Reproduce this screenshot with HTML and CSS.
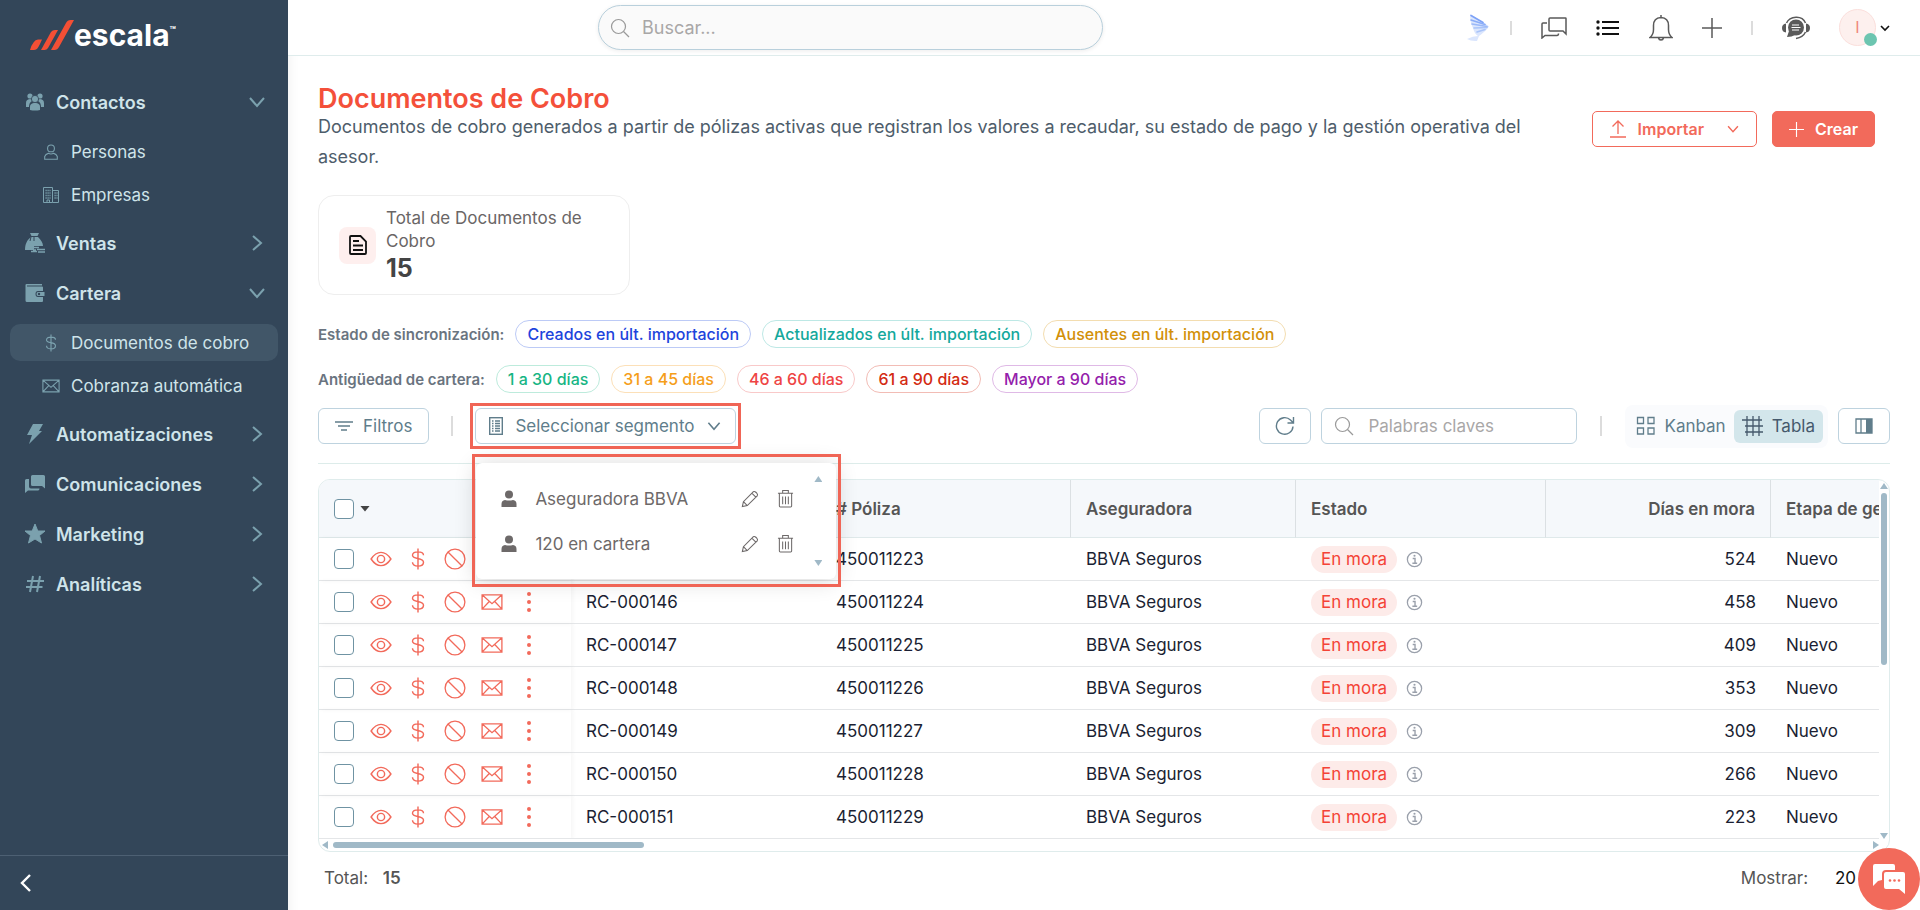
FILE: index.html
```html
<!DOCTYPE html>
<html lang="es">
<head>
<meta charset="UTF-8">
<meta name="viewport" content="width=device-width, initial-scale=1.0">
<title>Documentos de Cobro</title>
<link rel="stylesheet" href="styles.css">
</head>
<body>

<!-- icon sprite -->
<svg class="sprite" aria-hidden="true">
  <symbol id="i-down" viewBox="0 0 20 20"><path d="M3 6l7 8 7-8" fill="none" stroke="currentColor" stroke-width="2"/></symbol>
  <symbol id="i-right" viewBox="0 0 20 20"><path d="M6 3l8 7-8 7" fill="none" stroke="currentColor" stroke-width="2"/></symbol>
  <symbol id="i-left" viewBox="0 0 20 20"><path d="M14 2l-8 8 8 8" fill="none" stroke="currentColor" stroke-width="2.4"/></symbol>
  <symbol id="i-group" viewBox="0 0 20 20"><g fill="currentColor"><circle cx="5" cy="4" r="2.6"/><circle cx="15" cy="4" r="2.6"/><path d="M1 15V11c0-3 2-4 4.500-4L7 9c-2 1-3 3-3 6zM19 15V11c0-3-2-4-4.500-4L13 9c2 1 3 3 3 6z"/></g><circle cx="10" cy="7" r="3.600" fill="currentColor" stroke="#334659" stroke-width=".8"/><path d="M5 18v-3c0-3 2-4 5-4s5 1 5 4v3q-5 1-10 0z" fill="currentColor"/></symbol>
  <symbol id="i-user" viewBox="0 0 18 20"><g fill="none" stroke="currentColor" stroke-width="1.200"><circle cx="9" cy="6" r="3.800"/><path d="M2 18v-3q1-3 4-3.500 3 1.500 6 0 3 .5 4 3.500v3z"/></g></symbol>
  <symbol id="i-building" viewBox="0 0 18 18"><g fill="none" stroke="currentColor"><path d="M1.500 16.500v-15h9v15zM10.500 4.500h6v12h-6M5 16v-2h2.500v2"/><path d="M3.500 4.500h5M3.500 7h5M3.500 9.500h5M3.500 12h5M12.500 7h3M12.500 9.500h3M12.500 12h3" stroke-dasharray="1.200 .8" stroke-width="1.300"/></g></symbol>
  <symbol id="i-bag" viewBox="0 0 20 20"><path d="M5 0h9l-1.500 3h-6zM6 4h7c3 3 5 6 5 9h-9v4H0c0-6 2-10 6-13z" fill="currentColor"/><path d="M6 4L5 8M9 4v4" stroke="#334659" fill="none"/><path d="M7 14.500h7M12 16.500h8M6 18.500h6M13 19h7M8 17h3" stroke="currentColor" stroke-width="1.300"/></symbol>
  <symbol id="i-wallet" viewBox="0 0 20 20"><path d="M1.500 1H17v1.500H2v1h15q1 0 1 1V8h-5q-2.500 0-2.500 3t2.500 3h5v4q0 1-1 1H2q-1.500 0-1.500-1.500V2q0-1 1-1z" fill="currentColor"/><path d="M19.500 9v4h-6.500q-1.500 0-1.500-2t1.500-2z" fill="currentColor"/><circle cx="14" cy="11" r="1.200" fill="#334659"/></symbol>
  <symbol id="i-dollar" viewBox="0 0 14 20"><path d="M12 6.500C12 4.500 10 3.500 7 3.500S2 4.500 2 6.700C2 11 12 8 12 13c0 2.500-2 3.500-5 3.500s-5-1-5-3.500M7 .5v19" fill="none" stroke="currentColor" stroke-width="1.300"/></symbol>
  <symbol id="i-mail" viewBox="0 0 20 16"><path d="M1 1.500h18v13H1zM1 1.500l9 8 9-8M1 14.500l6.500-7M19 14.500l-6.500-7" fill="none" stroke="currentColor" stroke-width="1.200"/></symbol>
  <symbol id="i-bolt" viewBox="0 0 20 20"><path d="M8 0h10l-4 7h3L4 20l3-9H2z" fill="currentColor"/></symbol>
  <symbol id="i-chats" viewBox="0 0 20 20"><path d="M7.500 1h11q1.500 0 1.500 1.500v12L17 12H7.500Q6 12 6 10.500v-8Q6 1 7.500 1z" fill="currentColor"/><path d="M4 5H1.500Q0 5 0 6.500V19l3-2.500h10q1.500 0 1.500-2H6q-2 0-2-2z" fill="currentColor"/></symbol>
  <symbol id="i-star" viewBox="0 0 20 20"><path d="M10 0l2.800 7H20l-5.500 4.500L16.500 19 10 15l-6.500 4 2-7.500L0 7h7.200z" fill="currentColor" stroke="currentColor" stroke-linejoin="round"/></symbol>
  <symbol id="i-hash" viewBox="0 0 20 20"><path d="M8 2L5 18M15 2l-3 16M2 7h17M1 13h16.500" fill="none" stroke="currentColor" stroke-width="2"/></symbol>
  <symbol id="i-search" viewBox="0 0 20 20"><g fill="none" stroke="currentColor" stroke-width="1.200"><circle cx="8.500" cy="8.500" r="7"/><path d="M13.500 13.500l5.500 5.500"/></g></symbol>
  <symbol id="i-plus" viewBox="0 0 20 20"><path d="M10 0v20M0 10h20" fill="none" stroke="currentColor" stroke-width="1.500"/></symbol>
  <symbol id="i-upload" viewBox="0 0 18 18"><path d="M9 14V1M3.500 6.500L9 1l5.500 5.500M1 17h16" fill="none" stroke="currentColor" stroke-width="1.300"/></symbol>
  <symbol id="i-eye" viewBox="0 0 20 16"><g fill="none" stroke="currentColor" stroke-width="1.300"><path d="M1 8q4-6 9-6t9 6q-4 6-9 6T1 8z"/><circle cx="10" cy="8" r="3.300"/></g></symbol>
  <symbol id="i-ban" viewBox="0 0 20 20"><g fill="none" stroke="currentColor" stroke-width="1.200"><circle cx="10" cy="10" r="9"/><path d="M3.600 3.600l12.800 12.800"/></g></symbol>
  <symbol id="i-dots" viewBox="0 0 6 22"><g fill="currentColor"><circle cx="3" cy="3" r="2"/><circle cx="3" cy="11" r="2"/><circle cx="3" cy="19" r="2"/></g></symbol>
  <symbol id="i-info" viewBox="0 0 16 16"><circle cx="8" cy="8" r="6.700" fill="none" stroke="currentColor" stroke-width="1.200"/><path d="M6.300 7H8.500v4.500M6 11.500h4.500" fill="none" stroke="currentColor" stroke-width="1.300"/><circle cx="8" cy="4.500" r="1" fill="currentColor"/></symbol>
  <symbol id="i-person" viewBox="0 0 16 18"><circle cx="8" cy="4.500" r="4" fill="currentColor"/><path d="M.5 17v-3q0-3.500 3.500-4 4 1.200 8 0 3.500.5 3.500 4v3z" fill="currentColor"/></symbol>
  <symbol id="i-pencil" viewBox="0 0 20 20"><path d="M1.500 18.500l1.200-5.500L13.500 2q1.500-1 3 .5l1 1q1.500 1.500.5 3L7 17.300zM12 3.500l4.500 4.500M2.700 13L7 17.300" fill="none" stroke="currentColor" stroke-width="1.200"/></symbol>
  <symbol id="i-trash" viewBox="0 0 18 20"><path d="M1 4.500h16M6 4V1.500h6V4M2.500 5v13q0 1 1 1h11q1 0 1-1V5M6 8v8M9 8v8M12 8v8" fill="none" stroke="currentColor" stroke-width="1.100"/></symbol>
</svg>

<div class="app">
  <aside class="sidebar">
    <a class="logo" href="#">
      <svg width="44" height="30" viewBox="0 0 44 30" aria-hidden="true">
        <g fill="#f44f35">
          <path d="M0 30q3-10 8-10.500h4Q8 29 6 29.500q-1 .5-6 .5z"/>
          <path d="M11 30L21 12q1.500-2 4-2h3L18 28q-1.200 2-3.500 2z"/>
          <path d="M21 30L36 3q1.500-3 4.500-3H44L29 27q-1.500 3-4.500 3z"/>
        </g>
      </svg>
      <span>escala</span><sup>™</sup>
    </a>
    <nav class="menu">
      <a class="item" href="#"><svg class="ico"><use href="#i-group"/></svg>Contactos<svg class="arrow"><use href="#i-down"/></svg></a>
      <div class="submenu">
        <a href="#"><svg class="ico"><use href="#i-user"/></svg>Personas</a>
        <a href="#"><svg class="ico"><use href="#i-building"/></svg>Empresas</a>
      </div>
      <a class="item" href="#"><svg class="ico"><use href="#i-bag"/></svg>Ventas<svg class="arrow"><use href="#i-right"/></svg></a>
      <a class="item" href="#"><svg class="ico"><use href="#i-wallet"/></svg>Cartera<svg class="arrow"><use href="#i-down"/></svg></a>
      <div class="submenu">
        <a class="active" href="#"><svg class="ico"><use href="#i-dollar"/></svg>Documentos de cobro</a>
        <a href="#"><svg class="ico"><use href="#i-mail"/></svg>Cobranza automática</a>
      </div>
      <a class="item" href="#"><svg class="ico"><use href="#i-bolt"/></svg>Automatizaciones<svg class="arrow"><use href="#i-right"/></svg></a>
      <a class="item" href="#"><svg class="ico"><use href="#i-chats"/></svg>Comunicaciones<svg class="arrow"><use href="#i-right"/></svg></a>
      <a class="item" href="#"><svg class="ico"><use href="#i-star"/></svg>Marketing<svg class="arrow"><use href="#i-right"/></svg></a>
      <a class="item" href="#"><svg class="ico"><use href="#i-hash"/></svg>Analíticas<svg class="arrow"><use href="#i-right"/></svg></a>
    </nav>
    <button class="collapse" aria-label="Contraer menú"><svg width="20" height="20"><use href="#i-left"/></svg></button>
  </aside>

  <div class="page">
    <header class="topbar">
      <label class="global-search">
        <svg width="20" height="20"><use href="#i-search"/></svg>
        <input type="text" placeholder="Buscar..." aria-label="Buscar">
      </label>
      <div class="top-icons">
        <button class="assistant" aria-label="Asistente">
          <svg width="24" height="28" viewBox="0 0 24 28"><path d="M3 0l13 8 6 4.500Q19 17 12 22L10 27q-6 .5-10-2 6-3 11-3-4-3-5-8-3-6-3-14z" fill="#dbe6fd"/><g fill="none" stroke-linecap="round" stroke-width="1.600"><path d="M4 1.500l12 7" stroke="#7da2f7"/><path d="M4 6l14 4.500" stroke="#8badf8"/><path d="M5 10l15 2.500" stroke="#9bb9f8"/><path d="M7 14l13-.5" stroke="#a9c4f9"/><path d="M10 18l8-2.500" stroke="#a9c4f9"/></g></svg>
        </button>
        <span class="sep"></span>
        <button aria-label="Chat">
          <svg width="26" height="22" viewBox="0 0 26 22"><path d="M9 1h15.500q.5 0 .5.500V17l-3-3H9q-1 0-1-1V2q0-1 1-1zM6 6H2Q1 6 1 7v14l3-2.500h12q1.500 0 1.500-2" fill="none" stroke="currentColor" stroke-width="1.500"/></svg>
        </button>
        <button class="dark" aria-label="Tareas">
          <svg width="24" height="18" viewBox="0 0 24 18"><path d="M6 3h17M6 9h17M6 15h17" stroke="currentColor" stroke-width="2"/><g fill="currentColor"><circle cx="2" cy="3" r="1.700"/><circle cx="2" cy="9" r="1.700"/><circle cx="2" cy="15" r="1.700"/></g></svg>
        </button>
        <button aria-label="Notificaciones">
          <svg width="24" height="26" viewBox="0 0 24 26"><path d="M12 0v2.500M1 22.500q3.500-3 3.500-8v-4Q4.500 3 12 2.500q7.500.5 7.500 8v4q0 5 3.500 8zM9.500 23q.5 2 2.500 2t2.500-2" fill="none" stroke="currentColor" stroke-width="1.500"/></svg>
        </button>
        <button aria-label="Añadir"><svg width="20" height="20"><use href="#i-plus"/></svg></button>
        <span class="sep"></span>
        <button aria-label="Soporte">
          <svg width="28" height="24" viewBox="0 0 28 24"><g fill="currentColor"><circle cx="14" cy="11.500" r="8"/><path d="M7 15l-2 6q5 0 8-2z"/><path d="M4 7.500v9q-4-.5-4-4.500t4-4.500zM24 7.500v9q4-.5 4-4.500t-4-4.500z"/></g><path d="M4.500 7Q7 1.500 14 1.200T23.500 7M23.500 16Q21 21.500 14 22.500" fill="none" stroke="currentColor" stroke-width="1.500"/><path d="M10 9h7M9.500 11.500h9M10 14h7" stroke="#fff"/></svg>
        </button>
        <button class="account" aria-label="Cuenta">
          <span class="avatar">I</span><span class="status"></span>
          <svg width="10" height="10" viewBox="0 0 10 10"><path d="M1 3l4 4 4-4" fill="none" stroke="currentColor" stroke-width="1.600"/></svg>
        </button>
      </div>
    </header>

    <main class="content">
      <section class="heading">
        <div class="heading-text">
          <h1>Documentos de Cobro</h1>
          <p>Documentos de cobro generados a partir de pólizas activas que registran los valores a recaudar, su estado de pago y la gestión operativa del asesor.</p>
        </div>
        <div class="heading-actions">
          <button class="btn-outline"><svg width="18" height="18"><use href="#i-upload"/></svg>Importar<svg class="caret" width="14" height="14"><use href="#i-down"/></svg></button>
          <button class="btn-solid"><svg width="15" height="15"><use href="#i-plus"/></svg>Crear</button>
        </div>
      </section>

      <section class="card">
        <span class="card-icon">
          <svg width="18" height="20" viewBox="0 0 18 20"><path d="M2 1h9.500L17 6.500V18q0 1-1 1H2q-1 0-1-1V2q0-1 1-1zM4 6h6M4 10.500h10M4 15h10" fill="none" stroke="#111" stroke-width="1.800"/></svg>
        </span>
        <div>
          <p>Total de Documentos de Cobro</p>
          <strong>15</strong>
        </div>
      </section>

      <div class="chips">
        <span>Estado de sincronización:</span>
        <button class="chip blue">Creados en últ. importación</button>
        <button class="chip teal">Actualizados en últ. importación</button>
        <button class="chip gold">Ausentes en últ. importación</button>
      </div>
      <div class="chips">
        <span>Antigüedad de cartera:</span>
        <button class="chip green">1 a 30 días</button>
        <button class="chip orange">31 a 45 días</button>
        <button class="chip red">46 a 60 días</button>
        <button class="chip darkred">61 a 90 días</button>
        <button class="chip purple">Mayor a 90 días</button>
      </div>

      <div class="toolbar">
        <button class="tool filters"><svg width="18" height="10" viewBox="0 0 18 10"><path d="M0 1h18M3 5h12M6 9h6" stroke="currentColor" stroke-width="1.500"/></svg>Filtros</button>
        <span class="sep"></span>
        <div class="segment">
          <button class="tool"><svg width="14" height="18" viewBox="0 0 14 18"><rect x=".700" y=".700" width="12.600" height="16.600" fill="none" stroke="currentColor" stroke-width="1.400"/><path d="M3 4h1.500M6 4h5M3 6.500h1.500M6 6.500h5M3 9h1.500M6 9h5M3 11.500h1.500M6 11.500h5M3 14h1.500M6 14h5" stroke="currentColor" stroke-width="1.300"/></svg>Seleccionar segmento<svg width="16" height="16"><use href="#i-down"/></svg></button>
          <div class="mark mark-button"></div>
          <div class="mark mark-menu"></div>
          <div class="dropdown">
            <ul>
              <li><svg width="16" height="18"><use href="#i-person"/></svg><span>Aseguradora BBVA</span><button aria-label="Editar"><svg width="18" height="18"><use href="#i-pencil"/></svg></button><button aria-label="Eliminar"><svg width="17" height="19"><use href="#i-trash"/></svg></button></li>
              <li><svg width="16" height="18"><use href="#i-person"/></svg><span>120 en cartera</span><button aria-label="Editar"><svg width="18" height="18"><use href="#i-pencil"/></svg></button><button aria-label="Eliminar"><svg width="17" height="19"><use href="#i-trash"/></svg></button></li>
            </ul>
            <div class="steps"><i class="tri up"></i><i class="tri down"></i></div>
          </div>
        </div>

        <div class="tools-right">
          <button class="tool square" aria-label="Actualizar"><svg width="20" height="20" viewBox="0 0 20 20"><path d="M18 10.500A8.300 8.300 0 1 1 15.500 4L18 6.500M18.500 1v6h-6" fill="none" stroke="currentColor" stroke-width="1.400"/></svg></button>
          <label class="keyword">
            <svg width="20" height="20"><use href="#i-search"/></svg>
            <input type="text" placeholder="Palabras claves" aria-label="Palabras claves">
          </label>
          <span class="sep"></span>
          <div class="views">
            <button><svg width="20" height="20" viewBox="0 0 20 20"><path d="M1.500 1.500h6v6h-6zM12 1.500h6v6h-6zM1.500 12h6v6h-6zM12 12h6v6h-6z" fill="none" stroke="currentColor" stroke-width="1.300"/></svg>Kanban</button>
            <button class="selected"><svg width="22" height="22" viewBox="0 0 22 22"><path d="M5 1v20M11 1v20M17 1v20M0 5h20M3 11h18M3 17h18" fill="none" stroke="currentColor" stroke-width="1.300"/></svg>Tabla</button>
          </div>
          <button class="tool square" aria-label="Columnas"><svg width="18" height="16" viewBox="0 0 18 16"><path d="M1 1h16v14H1zM6 1v14" fill="none" stroke="currentColor" stroke-width="1.300"/><path d="M11 1h6v14h-6z" fill="currentColor"/></svg></button>
        </div>
      </div>

      <div class="grid">
        <div class="grid-view">
          <table>
            <colgroup><col class="c-actions"><col class="c-wide"><col class="c-wide"><col class="c-mid"><col class="c-wide"><col class="c-mid"><col class="c-wide"></colgroup>
            <thead>
              <tr>
                <th><div class="actions"><input type="checkbox" aria-label="Seleccionar todo"><i class="tri menu-tri"></i></div></th>
                <th></th>
                <th># Póliza</th>
                <th>Aseguradora</th>
                <th>Estado</th>
                <th class="num">Días en mora</th>
                <th>Etapa de gestión</th>
              </tr>
            </thead>
            <tbody>
              <tr>
                <td><div class="actions"><input type="checkbox" aria-label="Seleccionar"><svg><use href="#i-eye"/></svg><svg><use href="#i-dollar"/></svg><svg><use href="#i-ban"/></svg></div></td>
                <td></td><td>450011223</td><td>BBVA Seguros</td>
                <td><div class="state"><span>En mora</span><svg><use href="#i-info"/></svg></div></td>
                <td class="num">524</td><td>Nuevo</td>
              </tr>
              <tr>
                <td><div class="actions"><input type="checkbox" aria-label="Seleccionar"><svg><use href="#i-eye"/></svg><svg><use href="#i-dollar"/></svg><svg><use href="#i-ban"/></svg><svg><use href="#i-mail"/></svg><svg><use href="#i-dots"/></svg></div></td>
                <td>RC-000146</td><td>450011224</td><td>BBVA Seguros</td>
                <td><div class="state"><span>En mora</span><svg><use href="#i-info"/></svg></div></td>
                <td class="num">458</td><td>Nuevo</td>
              </tr>
              <tr>
                <td><div class="actions"><input type="checkbox" aria-label="Seleccionar"><svg><use href="#i-eye"/></svg><svg><use href="#i-dollar"/></svg><svg><use href="#i-ban"/></svg><svg><use href="#i-mail"/></svg><svg><use href="#i-dots"/></svg></div></td>
                <td>RC-000147</td><td>450011225</td><td>BBVA Seguros</td>
                <td><div class="state"><span>En mora</span><svg><use href="#i-info"/></svg></div></td>
                <td class="num">409</td><td>Nuevo</td>
              </tr>
              <tr>
                <td><div class="actions"><input type="checkbox" aria-label="Seleccionar"><svg><use href="#i-eye"/></svg><svg><use href="#i-dollar"/></svg><svg><use href="#i-ban"/></svg><svg><use href="#i-mail"/></svg><svg><use href="#i-dots"/></svg></div></td>
                <td>RC-000148</td><td>450011226</td><td>BBVA Seguros</td>
                <td><div class="state"><span>En mora</span><svg><use href="#i-info"/></svg></div></td>
                <td class="num">353</td><td>Nuevo</td>
              </tr>
              <tr>
                <td><div class="actions"><input type="checkbox" aria-label="Seleccionar"><svg><use href="#i-eye"/></svg><svg><use href="#i-dollar"/></svg><svg><use href="#i-ban"/></svg><svg><use href="#i-mail"/></svg><svg><use href="#i-dots"/></svg></div></td>
                <td>RC-000149</td><td>450011227</td><td>BBVA Seguros</td>
                <td><div class="state"><span>En mora</span><svg><use href="#i-info"/></svg></div></td>
                <td class="num">309</td><td>Nuevo</td>
              </tr>
              <tr>
                <td><div class="actions"><input type="checkbox" aria-label="Seleccionar"><svg><use href="#i-eye"/></svg><svg><use href="#i-dollar"/></svg><svg><use href="#i-ban"/></svg><svg><use href="#i-mail"/></svg><svg><use href="#i-dots"/></svg></div></td>
                <td>RC-000150</td><td>450011228</td><td>BBVA Seguros</td>
                <td><div class="state"><span>En mora</span><svg><use href="#i-info"/></svg></div></td>
                <td class="num">266</td><td>Nuevo</td>
              </tr>
              <tr>
                <td><div class="actions"><input type="checkbox" aria-label="Seleccionar"><svg><use href="#i-eye"/></svg><svg><use href="#i-dollar"/></svg><svg><use href="#i-ban"/></svg><svg><use href="#i-mail"/></svg><svg><use href="#i-dots"/></svg></div></td>
                <td>RC-000151</td><td>450011229</td><td>BBVA Seguros</td>
                <td><div class="state"><span>En mora</span><svg><use href="#i-info"/></svg></div></td>
                <td class="num">223</td><td>Nuevo</td>
              </tr>
            </tbody>
          </table>
        </div>
        <div class="vbar"><i class="tri up"></i><span></span><i class="tri down"></i></div>
        <div class="hbar"><i class="tri prev"></i><span></span><i class="tri next"></i></div>
      </div>

      <footer class="pager">
        <p>Total: <strong>15</strong></p>
        <p>Mostrar: <span>20</span></p>
      </footer>
    </main>
  </div>
</div>

<button class="chat-fab" aria-label="Abrir chat">
  <svg width="34" height="32" viewBox="0 0 34 32"><path d="M3 1h18q2 0 2 2v4H14q-4 0-4 4v6l-4 1-5 5V3q0-2 2-2z" fill="#fff"/><path d="M14 9h17q2 0 2 2v20l-6-5H14q-2 0-2-2V11q0-2 2-2z" fill="#fff"/><g fill="#f26a5b"><circle cx="18" cy="17.500" r="1.300"/><circle cx="22.500" cy="17.500" r="1.300"/><circle cx="27" cy="17.500" r="1.300"/></g></svg>
</button>

</body>
</html>
```
FILE: styles.css
```css
* {
  box-sizing: border-box;
}
body {
  margin: 0;
  font-family: Inter, "Noto Sans", sans-serif;
  font-size: 17px;
  color: #1b1f33;
  background: #fff;
}
h1, p, ul {
  margin: 0;
  padding: 0;
}
a {
  color: inherit;
  text-decoration: none;
}
button, input {
  font: inherit;
  color: inherit;
}
button {
  background: none;
  border: none;
  padding: 0;
  cursor: pointer;
}
svg {
  display: block;
  flex: none;
}
.sprite {
  position: absolute;
  width: 0;
  height: 0;
}
.app {
  display: flex;
  height: 100vh;
  overflow: hidden;
}

/* Sidebar */
.sidebar {
  width: 288px;
  flex: none;
  display: flex;
  flex-direction: column;
  background: #334659;
  color: #cfe4ea;
}
.logo {
  display: flex;
  align-items: center;
  height: 77px;
  padding: 0 30px 8px;
  color: #fff;
  font-size: 30px;
  font-weight: 700;
}
.logo sup {
  font-size: 10px;
  align-self: flex-start;
  margin-top: 24px;
}
.menu {
  flex: 1;
}
.item, .submenu a {
  display: flex;
  align-items: center;
}
.item {
  height: 50px;
  padding: 0 21px 0 25px;
  gap: 11px;
  font-size: 18px;
  font-weight: 600;
}
.item .ico {
  width: 20px;
  height: 20px;
  color: #7ba1ae;
}
.arrow {
  width: 20px;
  height: 20px;
  margin-left: auto;
  color: #7ba1ae;
}
.submenu {
  display: flex;
  flex-direction: column;
  gap: 6px;
  padding: 6px 10px 5px;
}
.submenu a {
  height: 37px;
  padding-left: 32px;
  gap: 11px;
  border-radius: 10px;
}
.submenu .ico {
  width: 18px;
  height: 18px;
  color: #7ba1ae;
}
.submenu .active {
  background: #415668;
}
.collapse {
  height: 55px;
  padding-left: 16px;
  border-top: 1px solid #4d6073;
  color: #fff;
}

/* Top bar */
.page {
  flex: 1;
  min-width: 0;
  display: flex;
  flex-direction: column;
}
.topbar {
  height: 56px;
  flex: none;
  display: grid;
  grid-template-columns: minmax(0, 505px) 1fr;
  align-items: center;
  padding: 0 30px 0 310px;
  border-bottom: 1px solid #dfecec;
}
.global-search {
  display: flex;
  align-items: center;
  gap: 10px;
  height: 45px;
  padding: 0 11px;
  border: 1px solid #b9d0dc;
  border-radius: 23px;
  background: #fafafa;
  box-shadow: 0 1px 4px rgba(0, 0, 0, 0.08);
  color: #999;
}
.global-search input, .keyword input {
  flex: 1;
  min-width: 0;
  border: none;
  outline: none;
  background: none;
}
.global-search input {
  font-size: 18px;
}
::placeholder {
  color: #a9a7a7;
  opacity: 1;
}
.top-icons {
  display: flex;
  align-items: center;
  justify-content: flex-end;
  gap: 29px;
  color: #5a5a5a;
}
.top-icons .dark {
  color: #111;
}
.top-icons .sep {
  height: 14px;
}
.assistant {
  margin-right: -10px;
}
.sep {
  width: 2px;
  height: 20px;
  background: #dcdcdc;
}
.account {
  position: relative;
  display: flex;
  align-items: center;
  gap: 4px;
  color: #111;
}
.avatar {
  width: 37px;
  height: 37px;
  border: 1px solid #fbdfdc;
  border-radius: 50%;
  background: #fdf0ee;
  color: #f0877c;
  font-size: 16px;
  line-height: 35px;
}
.status {
  position: absolute;
  left: 25px;
  bottom: 0;
  width: 13px;
  height: 13px;
  border-radius: 50%;
  background: #6cc5b0;
}

/* Page heading */
.content {
  flex: 1;
  padding: 30px 30px 0;
  box-shadow: inset 14px 0 12px -12px rgba(0, 0, 0, 0.05);
}
.heading {
  display: flex;
  justify-content: space-between;
  gap: 60px;
  padding-right: 15px;
}
h1 {
  color: #f4503a;
  font-size: 27px;
  font-weight: 600;
  line-height: 26px;
}
.heading-text p {
  color: #4e5d6b;
  font-size: 18px;
  line-height: 30px;
}
.heading-actions {
  display: flex;
  gap: 15px;
  padding-top: 25px;
}
.btn-outline, .btn-solid {
  display: flex;
  align-items: center;
  height: 36px;
  gap: 11px;
  padding: 0 16px;
  border: 1px solid #f26a5b;
  border-radius: 5px;
  color: #f26a5b;
  font-size: 16px;
  font-weight: 600;
}
.btn-outline .caret {
  margin-left: 11px;
}
.btn-solid {
  background: #f26a5b;
  color: #fff;
}
.card {
  width: 312px;
  height: 100px;
  margin-top: 23px;
  padding: 0 20px;
  display: flex;
  align-items: center;
  gap: 10px;
  border: 1px solid #eee;
  border-radius: 16px;
  color: #6a6666;
}
.card p {
  line-height: 23px;
}
.card strong {
  font-size: 25px;
  line-height: 30px;
  color: #444;
}
.card-icon {
  display: grid;
  place-items: center;
  flex: none;
  width: 37px;
  height: 37px;
  border-radius: 8px;
  background: #feefee;
}

/* Filter chips */
.chips {
  display: flex;
  align-items: center;
  gap: 11px;
  margin-top: 17px;
  color: #6a7480;
  font-size: 15px;
  font-weight: 600;
}
.card + .chips {
  margin-top: 25px;
}
.chip {
  height: 28px;
  padding: 0 11px;
  border: 1px solid;
  border-radius: 14px;
  font-size: 16px;
  font-weight: 500;
}
.blue { color: #1d44dc; border-color: #bccaf6; }
.teal { color: #14a89c; border-color: #bde8e5; }
.gold { color: #d29009; border-color: #f3ddb0; }
.green { color: #17b584; border-color: #bdebdc; }
.orange { color: #f59e1b; border-color: #fce0b8; }
.red { color: #ee4444; border-color: #f9c9c9; }
.darkred { color: #d32a12; border-color: #f2bcb5; }
.purple { color: #9420ab; border-color: #dfb9e6; }

/* Toolbar */
.toolbar {
  display: flex;
  align-items: center;
  gap: 22px;
  margin-top: 15px;
  padding-bottom: 19px;
  border-bottom: 1px solid #ddecea;
  color: #607d8b;
}
.tool {
  display: flex;
  align-items: center;
  height: 36px;
  border: 1px solid #bed3df;
  border-radius: 6px;
  background: #fff;
}
.filters {
  gap: 10px;
  padding: 0 16px;
}
.segment {
  position: relative;
}
.segment .tool {
  gap: 12px;
  padding: 0 13px;
}
.mark {
  position: absolute;
  border: 3px solid #f06556;
  pointer-events: none;
  z-index: 3;
}
.mark-button {
  inset: -5px;
}
.mark-menu {
  left: -3px;
  top: 46px;
  width: 369px;
  height: 133px;
}
.dropdown {
  position: absolute;
  left: 1px;
  top: 55px;
  z-index: 2;
  width: 360px;
  height: 116px;
  padding: 13px 14px 13px 25px;
  display: flex;
  gap: 20px;
  background: #fff;
  border-radius: 6px;
  box-shadow: 0 2px 22px rgba(0, 0, 0, 0.16);
  color: #6d6969;
}
.dropdown ul {
  flex: 1;
  list-style: none;
}
.dropdown li {
  display: flex;
  align-items: center;
  gap: 18px;
  height: 45px;
}
.dropdown li span {
  flex: 1;
}
.steps {
  display: flex;
  flex-direction: column;
  justify-content: space-between;
}
.tri {
  width: 8px;
  height: 6px;
  flex: none;
  background: #a0b9c7;
  clip-path: polygon(0 0, 100% 0, 50% 100%);
}
.tri.up {
  clip-path: polygon(50% 0, 100% 100%, 0 100%);
}
.tri.prev, .tri.next {
  width: 6px;
  height: 8px;
}
.tri.prev {
  clip-path: polygon(100% 0, 100% 100%, 0 50%);
}
.tri.next {
  clip-path: polygon(0 0, 100% 50%, 0 100%);
}
.tri.menu-tri {
  width: 10px;
  background: #444;
}
.tools-right {
  display: flex;
  align-items: center;
  gap: 10px;
  margin: -4px 0 -4px auto;
}
.square {
  width: 52px;
  justify-content: center;
}
.keyword {
  display: flex;
  align-items: center;
  gap: 12px;
  width: 256px;
  height: 36px;
  padding: 0 12px;
  border: 1px solid #bed3df;
  border-radius: 6px;
  color: #999;
}
.tools-right .sep {
  margin: 0 13px;
}
.views {
  display: flex;
  gap: 8px;
  padding: 5px 5px 5px 11px;
  border-radius: 8px;
  background: #fafbfd;
}
.views button {
  display: flex;
  align-items: center;
  gap: 8px;
  height: 33px;
}
.views .selected {
  padding: 0 8px;
  border-radius: 6px;
  background: #d3e6eb;
  color: #45596c;
}

/* Data table */
.grid {
  display: grid;
  grid-template-columns: minmax(0, 1fr) 10px;
  margin-top: 15px;
  border: 1px solid #dfecec;
  border-radius: 12px;
  overflow: hidden;
}
.grid-view {
  overflow: hidden;
}
table {
  width: 1700px;
  table-layout: fixed;
  border-collapse: separate;
  border-spacing: 0;
}
.c-actions { width: 252px; }
.c-wide { width: 250px; }
.c-mid { width: 225px; }
th {
  height: 58px;
  padding: 0 15px;
  background: #f5f8fb;
  border-bottom: 1px solid #dfe9ea;
  border-right: 1px solid #dbe0e3;
  color: #555;
  font-weight: 600;
  text-align: left;
}
th:first-child {
  border-right: none;
}
td {
  height: 43px;
  padding: 0 15px;
  border-bottom: 1px solid #e4e6e8;
}
td:first-child {
  box-shadow: 2px 0 4px rgba(0, 0, 0, 0.04);
}
.num {
  text-align: right;
}
.actions {
  display: grid;
  grid-template-columns: 28px 37px 37px 37px 37px 37px;
  align-items: center;
  justify-items: center;
}
.actions svg {
  width: 22px;
  height: 22px;
  color: #f26a5b;
}
.actions input {
  justify-self: start;
}
th .actions {
  grid-template-columns: 25px 12px;
}
input[type="checkbox"] {
  appearance: none;
  width: 20px;
  height: 20px;
  margin: 0;
  border: 1px solid #6f93a3;
  border-radius: 4px;
  background: #fff;
}
.state {
  display: flex;
  align-items: center;
  gap: 9px;
}
.state span {
  padding: 0 10px;
  line-height: 27px;
  border-radius: 14px;
  background: #fdebe9;
  color: #f44336;
}
.state svg {
  width: 17px;
  height: 17px;
  color: #9aa0ab;
}
.vbar {
  display: flex;
  flex-direction: column;
  align-items: center;
  gap: 4px;
  padding-top: 3px;
}
.vbar span {
  width: 6px;
  height: 172px;
  border-radius: 3px;
  background: #a0b9c7;
}
.vbar .down {
  margin-top: auto;
}
.hbar {
  display: flex;
  align-items: center;
  gap: 5px;
  height: 12px;
  padding-left: 3px;
}
.hbar span {
  width: 20%;
  height: 6px;
  border-radius: 3px;
  background: #a0b9c7;
}
.hbar .next {
  margin-left: auto;
}
.pager {
  display: flex;
  justify-content: space-between;
  padding: 16px 34px 0 6px;
  color: #555;
}
.pager strong {
  margin-left: 10px;
  font-weight: 600;
}
.pager span {
  margin-left: 22px;
  color: #111;
}
.chat-fab {
  position: fixed;
  right: 0;
  bottom: 0;
  z-index: 5;
  display: grid;
  place-items: center;
  width: 62px;
  height: 62px;
  border-radius: 50%;
  background: #f26a5b;
}
```
